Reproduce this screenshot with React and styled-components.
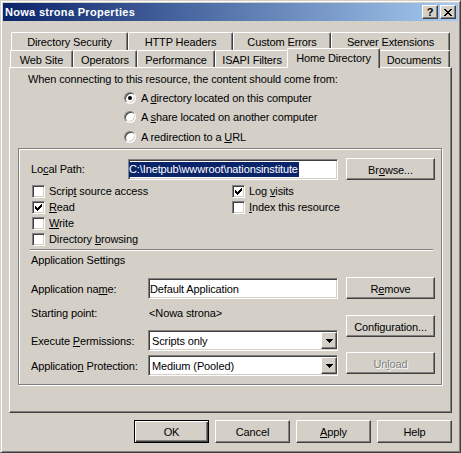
import React from "react";
import styled, { createGlobalStyle, css } from "styled-components";

const GlobalStyle = createGlobalStyle`
  html, body {
    margin: 0;
    padding: 0;
    background: #d4d0c8;
  }
  body {
    font-family: "Liberation Sans", Arial, sans-serif;
    font-size: 11px;
    letter-spacing: -0.12px;
    color: #000;
  }
`;

const raised = css`
  border: 1px solid;
  border-color: #fff #404040 #404040 #fff;
  box-shadow: inset -1px -1px 0 #808080;
`;

const sunken = css`
  border: 1px solid;
  border-color: #808080 #fff #fff #808080;
  box-shadow: inset 1px 1px 0 #404040, inset -1px -1px 0 #d4d0c8;
`;

const Window = styled.div`
  width: 461px;
  height: 453px;
  box-sizing: border-box;
  border: 1px solid;
  border-color: #d4d0c8 #404040 #404040 #d4d0c8;
  box-shadow: inset 1px 1px 0 #fff, inset -1px -1px 0 #808080;
  padding: 2px;
  background: #d4d0c8;
  display: flex;
  flex-direction: column;
`;

const TitleBar = styled.div`
  height: 18px;
  flex: none;
  display: flex;
  align-items: center;
  justify-content: space-between;
  padding: 0 2px 0 2px;
  background: linear-gradient(to right, #0a246a, #a6caf0);
  color: #fff;
  font-weight: bold;
`;

const TitleText = styled.span`
  letter-spacing: 0.3px;
`;

const TitleButtons = styled.div`
  display: flex;
  gap: 2px;
`;

const CaptionButton = styled.div`
  ${raised};
  box-sizing: border-box;
  width: 16px;
  height: 14px;
  background: #d4d0c8;
  color: #000;
  display: flex;
  align-items: center;
  justify-content: center;
  font-size: 11px;
  font-weight: bold;
  line-height: 1;
`;

const Body = styled.div`
  flex: 1;
  padding: 11px 6px 0 6px;
  display: flex;
  flex-direction: column;
`;

const TabRow = styled.div`
  display: flex;
  height: ${(p) => p.$h}px;
  padding-left: ${(p) => p.$indent}px;
`;

const Tab = styled.div`
  box-sizing: border-box;
  width: ${(p) => p.$w}px;
  height: 100%;
  flex: none;
  border-top: 1px solid #fff;
  border-left: 1px solid #fff;
  border-right: 1px solid #404040;
  box-shadow: inset -1px 0 0 #808080;
  border-radius: 2px 2px 0 0;
  background: #d4d0c8;
  display: flex;
  align-items: center;
  justify-content: center;
  white-space: nowrap;
  padding-top: 1px;

  ${(p) =>
    p.$active &&
    css`
      position: relative;
      z-index: 2;
      height: 20px;
      margin: -2px -2px -1px -2px;
      width: ${p.$w + 4}px;
      padding-top: 0;
      padding-bottom: 1px;
    `}
`;

const Panel = styled.div`
  box-sizing: border-box;
  width: 443px;
  height: 346px;
  border: 1px solid;
  border-color: #fff #404040 #404040 #fff;
  box-shadow: inset -1px -1px 0 #808080;
  display: flex;
  flex-direction: column;
`;

const Intro = styled.div`
  margin: 5px 0 0 18px;
  line-height: 13px;
`;

const RadioList = styled.div`
  margin: 2px 0 0 114px;
  display: flex;
  flex-direction: column;
`;

const RadioItem = styled.div`
  height: 19.5px;
  display: flex;
  align-items: center;
  gap: 5px;
`;

const RadioCircle = styled.div`
  box-sizing: border-box;
  width: 12px;
  height: 12px;
  border-radius: 50%;
  ${sunken};
  background: #fff;
  display: flex;
  align-items: center;
  justify-content: center;

  &::after {
    content: "";
    width: 4px;
    height: 4px;
    border-radius: 50%;
    background: ${(p) => (p.$on ? "#000" : "transparent")};
  }
`;

const GroupBox = styled.div`
  box-sizing: border-box;
  margin: 1.5px 0 0 8px;
  width: 424px;
  height: 237px;
  border: 1px solid #808080;
  box-shadow: inset 1px 1px 0 #fff, 1px 1px 0 #fff;
  padding-left: 12px;
  display: flex;
  flex-direction: column;
`;

const PathRow = styled.div`
  margin-top: 9px;
  height: 22px;
  display: flex;
  align-items: center;
`;

const FieldLabel = styled.div`
  width: ${(p) => p.$w}px;
  flex: none;
`;

const TextField = styled.div`
  box-sizing: border-box;
  ${sunken};
  width: ${(p) => p.$w}px;
  height: 21px;
  background: #fff;
  display: flex;
  align-items: center;
  padding-left: ${(p) => p.$pad}px;
  white-space: nowrap;
  overflow: hidden;
`;

const Selected = styled.span`
  background: #0a246a;
  color: #fff;
  line-height: 15px;
  padding-right: 1px;
`;

const Button = styled.div`
  box-sizing: border-box;
  ${raised};
  width: ${(p) => p.$w || 75}px;
  height: ${(p) => p.$h || 23}px;
  margin-top: ${(p) => p.$mt || 0}px;
  margin-left: ${(p) => p.$ml || 0}px;
  flex: none;
  background: #d4d0c8;
  display: flex;
  align-items: center;
  justify-content: center;
  padding-top: 1px;

  ${(p) =>
    p.$default &&
    css`
      border: 1px solid #000;
      box-shadow: inset 1px 1px 0 #fff, inset -1px -1px 0 #404040,
        inset -2px -2px 0 #808080;
    `}

  ${(p) =>
    p.$disabled &&
    css`
      color: #808080;
      text-shadow: 1px 1px 0 #fff;
    `}
`;

const CheckGrid = styled.div`
  margin: 3px 0 0 1px;
  display: grid;
  grid-template-columns: 200px auto;
  grid-auto-rows: 16px;
`;

const CheckItem = styled.div`
  display: flex;
  align-items: center;
  gap: 4px;
`;

const CheckBox = styled.div`
  box-sizing: border-box;
  width: 13px;
  height: 13px;
  ${sunken};
  background: #fff;
  display: flex;
  align-items: center;
  justify-content: center;
`;

const Separator = styled.div`
  margin: 2px 0 0 -1px;
  width: 403px;
  border-top: 1px solid #808080;
  border-bottom: 1px solid #fff;
`;

const SectionLabel = styled.div`
  margin-top: 3px;
  line-height: 13px;
`;

const AppArea = styled.div`
  margin-top: 11px;
  display: flex;
`;

const LeftCol = styled.div`
  display: flex;
  flex-direction: column;
`;

const RightCol = styled.div`
  margin-left: 8px;
  display: flex;
  flex-direction: column;
`;

const AppRow = styled.div`
  display: flex;
  align-items: center;
  height: ${(p) => p.$h}px;
  margin-top: ${(p) => p.$mt || 0}px;
`;

const PlainValue = styled.div`
  padding-left: 1px;
`;

const SelectBox = styled.div`
  box-sizing: border-box;
  ${sunken};
  width: 190px;
  height: 21px;
  background: #fff;
  display: flex;
  align-items: center;
  padding: 0 2px 0 2px;
`;

const SelectText = styled.div`
  flex: 1;
  padding-left: 1px;
`;

const DropButton = styled.div`
  box-sizing: border-box;
  ${raised};
  width: 16px;
  height: 17px;
  background: #d4d0c8;
  display: flex;
  align-items: center;
  justify-content: center;
  margin-right: -2px;
`;

const DialogButtons = styled.div`
  margin-top: 7px;
  width: 443px;
  display: flex;
  justify-content: flex-end;
  gap: 6px;
`;

const U = styled.span`
  text-decoration: underline;
  text-underline-offset: 1px;
`;

const CheckMark = () => (
  <svg width="7" height="7" viewBox="0 0 7 7" shapeRendering="crispEdges">
    <path
      d="M0 2H1V3H2V4H3V3H4V2H5V1H6V0H7V3H6V4H5V5H4V6H3V7H2V6H1V5H0Z"
      fill="#000"
    />
  </svg>
);

const Arrow = () => (
  <svg width="7" height="4" viewBox="0 0 7 4" shapeRendering="crispEdges">
    <path d="M0 0H7V1H6V2H5V3H4V4H3V3H2V2H1V1H0Z" fill="#000" />
  </svg>
);

const CloseGlyph = () => (
  <svg width="8" height="7" viewBox="0 0 8 7" shapeRendering="crispEdges">
    <path
      d="M0 0H2V1H3V2H5V1H6V0H8V1H7V2H6V3H5V4H6V5H7V6H8V7H6V6H5V5H3V6H2V7H0V6H1V5H2V4H3V3H2V2H1V1H0Z"
      fill="#000"
    />
  </svg>
);

const Check = ({ on, children }) => (
  <CheckItem>
    <CheckBox>{on && <CheckMark />}</CheckBox>
    <span>{children}</span>
  </CheckItem>
);

const Radio = ({ on, children }) => (
  <RadioItem>
    <RadioCircle $on={on} />
    <span>{children}</span>
  </RadioItem>
);

const Select = ({ value }) => (
  <SelectBox>
    <SelectText>{value}</SelectText>
    <DropButton>
      <Arrow />
    </DropButton>
  </SelectBox>
);

const upperTabs = [
  ["Directory Security", 117],
  ["HTTP Headers", 105],
  ["Custom Errors", 98],
  ["Server Extensions", 119],
];

const lowerTabs = [
  ["Web Site", 63],
  ["Operators", 64],
  ["Performance", 78],
  ["ISAPI Filters", 74],
  ["Home Directory", 89, true],
  ["Documents", 72],
];

export default function App() {
  return (
    <>
      <GlobalStyle />
      <Window>
        <TitleBar>
          <TitleText>Nowa strona Properties</TitleText>
          <TitleButtons>
            <CaptionButton>?</CaptionButton>
            <CaptionButton>
              <CloseGlyph />
            </CaptionButton>
          </TitleButtons>
        </TitleBar>

        <Body>
          <TabRow $h={18} $indent={2}>
            {upperTabs.map(([label, w]) => (
              <Tab key={label} $w={w}>
                {label}
              </Tab>
            ))}
          </TabRow>
          <TabRow $h={17} $indent={1}>
            {lowerTabs.map(([label, w, active]) => (
              <Tab key={label} $w={w} $active={active}>
                {label}
              </Tab>
            ))}
          </TabRow>

          <Panel>
            <Intro>When connecting to this resource, the content should come from:</Intro>
            <RadioList>
              <Radio on>
                A <U>d</U>irectory located on this computer
              </Radio>
              <Radio>
                A <U>s</U>hare located on another computer
              </Radio>
              <Radio>
                A redirection to a <U>U</U>RL
              </Radio>
            </RadioList>

            <GroupBox>
              <PathRow>
                <FieldLabel $w={97}>
                  Lo<U>c</U>al Path:
                </FieldLabel>
                <TextField $w={210} $pad={0}>
                  <Selected>C:\Inetpub\wwwroot\nationsinstitute</Selected>
                </TextField>
                <Button $w={89} $h={22} $ml={8}>
                  Br<U>o</U>wse...
                </Button>
              </PathRow>

              <CheckGrid>
                <Check>
                  Scrip<U>t</U> source access
                </Check>
                <Check on>
                  Log <U>v</U>isits
                </Check>
                <Check on>
                  <U>R</U>ead
                </Check>
                <Check>
                  <U>I</U>ndex this resource
                </Check>
                <Check>
                  <U>W</U>rite
                </Check>
                <span />
                <Check>
                  Directory <U>b</U>rowsing
                </Check>
              </CheckGrid>

              <Separator />
              <SectionLabel>Application Settings</SectionLabel>

              <AppArea>
                <LeftCol>
                  <AppRow $h={21}>
                    <FieldLabel $w={117}>
                      Application na<U>m</U>e:
                    </FieldLabel>
                    <TextField $w={190} $pad={1}>
                      Default Application
                    </TextField>
                  </AppRow>
                  <AppRow $h={14} $mt={7}>
                    <FieldLabel $w={117}>Starting point:</FieldLabel>
                    <PlainValue>&lt;Nowa strona&gt;</PlainValue>
                  </AppRow>
                  <AppRow $h={21} $mt={10}>
                    <FieldLabel $w={117}>
                      Execute <U>P</U>ermissions:
                    </FieldLabel>
                    <Select value="Scripts only" />
                  </AppRow>
                  <AppRow $h={21} $mt={4}>
                    <FieldLabel $w={117}>
                      Applicatio<U>n</U> Protection:
                    </FieldLabel>
                    <Select value="Medium (Pooled)" />
                  </AppRow>
                </LeftCol>
                <RightCol>
                  <Button $w={89} $h={22} $mt={-1}>
                    R<U>e</U>move
                  </Button>
                  <Button $w={89} $h={22} $mt={16}>
                    Configuration...
                  </Button>
                  <Button $w={89} $h={22} $mt={15} $disabled>
                    Un<U>l</U>oad
                  </Button>
                </RightCol>
              </AppArea>
            </GroupBox>
          </Panel>

          <DialogButtons>
            <Button $default>OK</Button>
            <Button>Cancel</Button>
            <Button>
              <U>A</U>pply
            </Button>
            <Button>Help</Button>
          </DialogButtons>
        </Body>
      </Window>
    </>
  );
}
